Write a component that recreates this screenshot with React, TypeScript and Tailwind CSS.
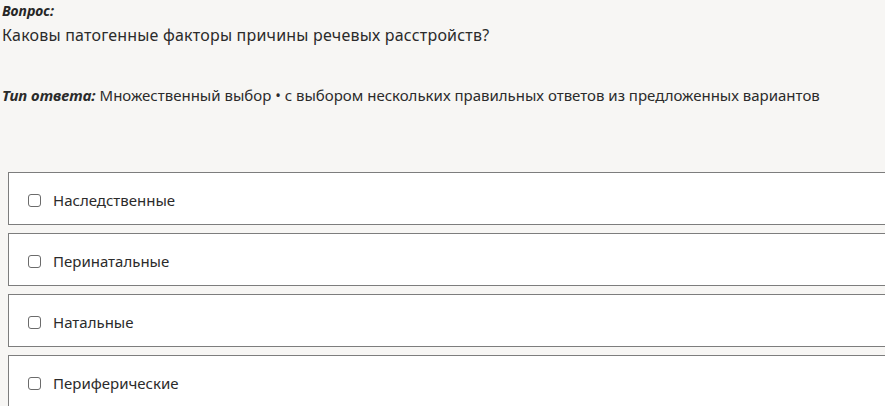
import React from "react";

const options = ["Наследственные", "Перинатальные", "Натальные", "Периферические"];

const App = () => {
  return (
    <div
      className="min-h-screen bg-[#f7f6f4] text-[#2b2b2b] overflow-hidden"
      style={{ fontFamily: '"Noto Sans", "Open Sans", sans-serif' }}
    >
      <div className="pt-[1px] pl-[2px]">
        <div className="text-[14px] leading-[20px] font-bold italic text-[#262626]">Вопрос:</div>
        <div className="text-[16px] tracking-[0.2px] leading-[28px]">
          Каковы патогенные факторы причины речевых расстройств?
        </div>
        <div className="text-[15px] leading-[24px] mt-[34px]">
          <span className="font-bold italic">Тип ответа:</span> Множественный выбор • с выбором
          нескольких правильных ответов из предложенных вариантов
        </div>
      </div>

      <div className="mt-[65px] ml-[8px] -mr-[20px] flex flex-col gap-[8px]">
        {options.map((o) => (
          <label
            key={o}
            className="h-[53px] bg-white border border-[#7d7d7d] flex items-center pl-[19px] pt-[3px] gap-[12px] text-[15px]"
          >
            <span className="w-[13px] h-[13px] rounded-[3px] border border-[#6b6b6b] bg-white shrink-0" />
            <span>{o}</span>
          </label>
        ))}
      </div>
    </div>
  );
};

export default App;
